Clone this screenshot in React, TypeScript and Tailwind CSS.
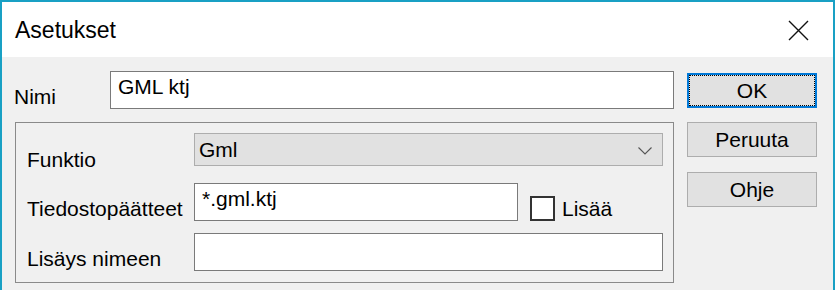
import React from "react"

const font = { fontFamily: '"Liberation Sans", Arial, sans-serif' }

function TextBox({ value, className }: { value?: string; className: string }) {
  return (
    <div className={`h-[38px] border border-[#7a7a7a] bg-white pl-[7px] pt-[3px] text-[21px] leading-[24px] text-black ${className}`}>
      {value}
    </div>
  )
}

function Btn({ label, focused, className }: { label: string; focused?: boolean; className: string }) {
  if (focused) {
    return (
      <div className={`h-[35px] w-[130px] border-2 border-[#0078d7] bg-[#e1e1e1] ${className}`}>
        <div className="flex h-full w-full items-center justify-center border border-dotted border-black text-[21px] leading-[24px]">
          {label}
        </div>
      </div>
    )
  }
  return (
    <div className={`flex h-[35px] w-[130px] items-center justify-center border border-[#adadad] bg-[#e1e1e1] text-[21px] leading-[24px] ${className}`}>
      {label}
    </div>
  )
}

export default function App() {
  return (
    <div style={font} className="h-[290px] w-[835px] overflow-hidden border-x-2 border-t-2 border-[#19a0c4] bg-[#f0f0f0] text-black">
      {/* title bar */}
      <div className="flex h-[55px] items-start justify-between bg-white pl-[13px] pr-[24px]">
        <div className="pt-[15px] text-[23px] leading-[26px]">Asetukset</div>
        <svg className="mt-[18px]" width="21" height="21" viewBox="0 0 21 21">
          <path d="M1 1 L20 20 M20 1 L1 20" stroke="#111" strokeWidth="1.4" fill="none" />
        </svg>
      </div>

      {/* client */}
      <div className="flex pl-[12px] pt-[14px] text-[21px] leading-[24px]">
        <div className="w-[660px]">
          <div className="flex h-[38px]">
            <div className="w-[96px] pt-[14px]">Nimi</div>
            <TextBox value="GML ktj" className="w-[564px]" />
          </div>

          <div className="ml-[1px] mt-[13px] h-[161px] w-[659px] border border-[#8a8a8a]">
            <div className="mt-[10px] flex h-[33px]">
              <div className="w-[178px] shrink-0 pl-[11px] pt-[15px]">Funktio</div>
              <div className="flex h-[33px] w-[469px] items-start justify-between border border-[#adadad] bg-[#e1e1e1] pl-[4px] pr-[10px] pt-[4px]">
                <span>Gml</span>
                <svg className="mt-[9px]" width="14" height="8" viewBox="0 0 14 8">
                  <path d="M0.5 0.5 L7 7 L13.5 0.5" stroke="#555" strokeWidth="1.1" fill="none" />
                </svg>
              </div>
            </div>

            <div className="mt-[17px] flex h-[38px]">
              <div className="w-[178px] shrink-0 pl-[11px] pt-[14px]">Tiedostopäätteet</div>
              <TextBox value="*.gml.ktj" className="w-[324px]" />
              <div className="ml-[12px] mt-[13px] h-[25px] w-[25px] border-2 border-[#333] bg-white" />
              <div className="ml-[7px] pt-[14px]">Lisää</div>
            </div>

            <div className="mt-[12px] flex h-[38px]">
              <div className="w-[178px] shrink-0 pl-[11px] pt-[14px]">Lisäys nimeen</div>
              <TextBox className="w-[469px]" />
            </div>
          </div>
        </div>

        <div className="ml-[13px] flex flex-col">
          <Btn label="OK" focused className="mt-[2px]" />
          <Btn label="Peruuta" className="mt-[14px]" />
          <Btn label="Ohje" className="mt-[15px]" />
        </div>
      </div>
    </div>
  )
}
